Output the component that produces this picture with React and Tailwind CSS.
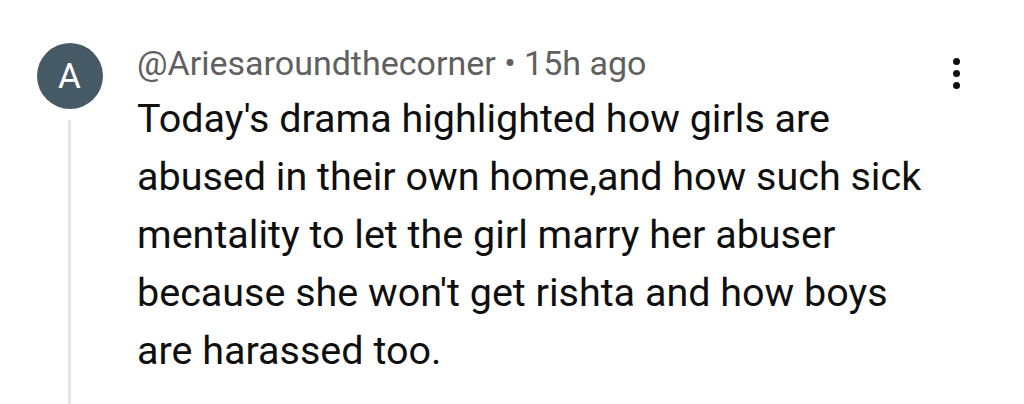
import React from "react";

const comment = {
	initial: "A",
	author: "@Ariesaroundthecorner",
	time: "15h ago",
	lines: [
		"Today's drama highlighted how girls are",
		"abused in their own home,and how such sick",
		"mentality to let the girl marry her abuser",
		"because she won't get rishta and how boys",
		"are harassed too.",
	],
};

const App = () => {
	return (
		<div
			className="w-[1024px] h-[404px] overflow-hidden bg-white flex"
			style={{ fontFamily: "Roboto, 'Liberation Sans', sans-serif" }}
		>
			<div className="w-[137px] shrink-0 flex flex-col items-center pl-[2px] pt-[43px]">
				<div className="w-[66px] h-[66px] rounded-full bg-[#455a64] flex items-center justify-center text-white text-[35px] leading-none">
					{comment.initial}
				</div>
				<div className="w-[3px] grow mt-[11px] bg-[#e6e6e6]"></div>
			</div>
			<div className="flex-1 min-w-0 pt-[43px]">
				<p className="text-[34px] leading-[40px] text-[#606060] whitespace-nowrap">
					{comment.author} • {comment.time}
				</p>
				<div className="mt-[7px] text-[39.5px] leading-[58px] text-[#0f0f0f]">
					{comment.lines.map((line, i) => (
						<p key={i} className="whitespace-nowrap">
							{line}
						</p>
					))}
				</div>
			</div>
			<div className="w-[136px] shrink-0 flex flex-col items-center gap-[5px] pt-[58px]">
				<span className="w-[7px] h-[7px] rounded-full bg-[#0f0f0f]"></span>
				<span className="w-[7px] h-[7px] rounded-full bg-[#0f0f0f]"></span>
				<span className="w-[7px] h-[7px] rounded-full bg-[#0f0f0f]"></span>
			</div>
		</div>
	);
};

export default App;
